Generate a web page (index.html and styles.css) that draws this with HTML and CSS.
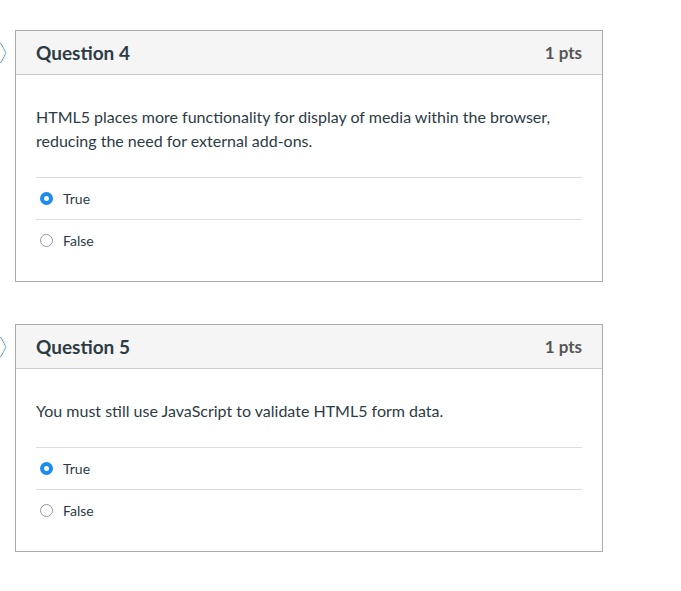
FILE: index.html
```html
<!DOCTYPE html>
<html lang="en">
<head>
  <meta charset="UTF-8" />
  <meta name="viewport" content="width=device-width, initial-scale=1.0"/>
  <title>Quiz</title>
  <link rel="stylesheet" href="styles.css">
</head>
<body>
  <div class="quiz">

    <div class="question">
      <svg class="flag" viewBox="0 0 10 22"><path d="M-4 1.5 H1 L6 11 L1 20.5 H-4"/></svg>
      <div class="question-header">
        <h2>Question 4</h2>
        <span class="points">1 pts</span>
      </div>
      <div class="question-body">
        <p class="question-text">HTML5 places more functionality for display of media within the browser, reducing the need for external add-ons.</p>
        <div class="answers">
          <label class="answer"><span class="radio checked"></span>True</label>
          <label class="answer"><span class="radio"></span>False</label>
        </div>
      </div>
    </div>

    <div class="question">
      <svg class="flag" viewBox="0 0 10 22"><path d="M-4 1.5 H1 L6 11 L1 20.5 H-4"/></svg>
      <div class="question-header">
        <h2>Question 5</h2>
        <span class="points">1 pts</span>
      </div>
      <div class="question-body">
        <p class="question-text">You must still use JavaScript to validate HTML5 form data.</p>
        <div class="answers">
          <label class="answer"><span class="radio checked"></span>True</label>
          <label class="answer"><span class="radio"></span>False</label>
        </div>
      </div>
    </div>

  </div>
</body>
</html>
```

FILE: styles.css
```css
body {
  margin: 0;
  font-family: Lato, 'Liberation Sans', sans-serif;
  color: #2d3b45;
  background: #fff;
}
.quiz {
  width: 588px;
  padding: 30px 0 0 15px;
  display: flex;
  flex-direction: column;
  gap: 42px;
}
.question {
  position: relative;
  border: 1px solid #aaa;
}
.flag {
  position: absolute;
  left: -16px;
  top: 11px;
  width: 10px;
  height: 22px;
  fill: none;
  stroke: #6fa3cf;
  stroke-width: 1;
}
.question-header {
  display: flex;
  justify-content: space-between;
  align-items: center;
  height: 43px;
  padding: 0 20px;
  background: #f5f5f5;
  border-bottom: 1px solid #c7cdd1;
}
.question-header h2 {
  margin: 0;
  font-size: 19px;
  font-weight: 700;
}
.points {
  font-size: 17px;
  font-weight: 700;
  color: #555;
}
.question-body {
  padding: 30px 20px 20px;
}
.question-text {
  margin: 0 0 24px;
  font-size: 16px;
  line-height: 24px;
}
.answer {
  display: flex;
  align-items: center;
  gap: 10px;
  height: 42px;
  padding-left: 4px;
  border-top: 1px solid #ddd;
  font-size: 14px;
  box-sizing: border-box;
}
.radio {
  width: 13px;
  height: 13px;
  border: 1px solid #999;
  border-radius: 50%;
  box-sizing: border-box;
  background: #fff;
}
.radio.checked {
  border: 4px solid #1a8cf0;
}
```
